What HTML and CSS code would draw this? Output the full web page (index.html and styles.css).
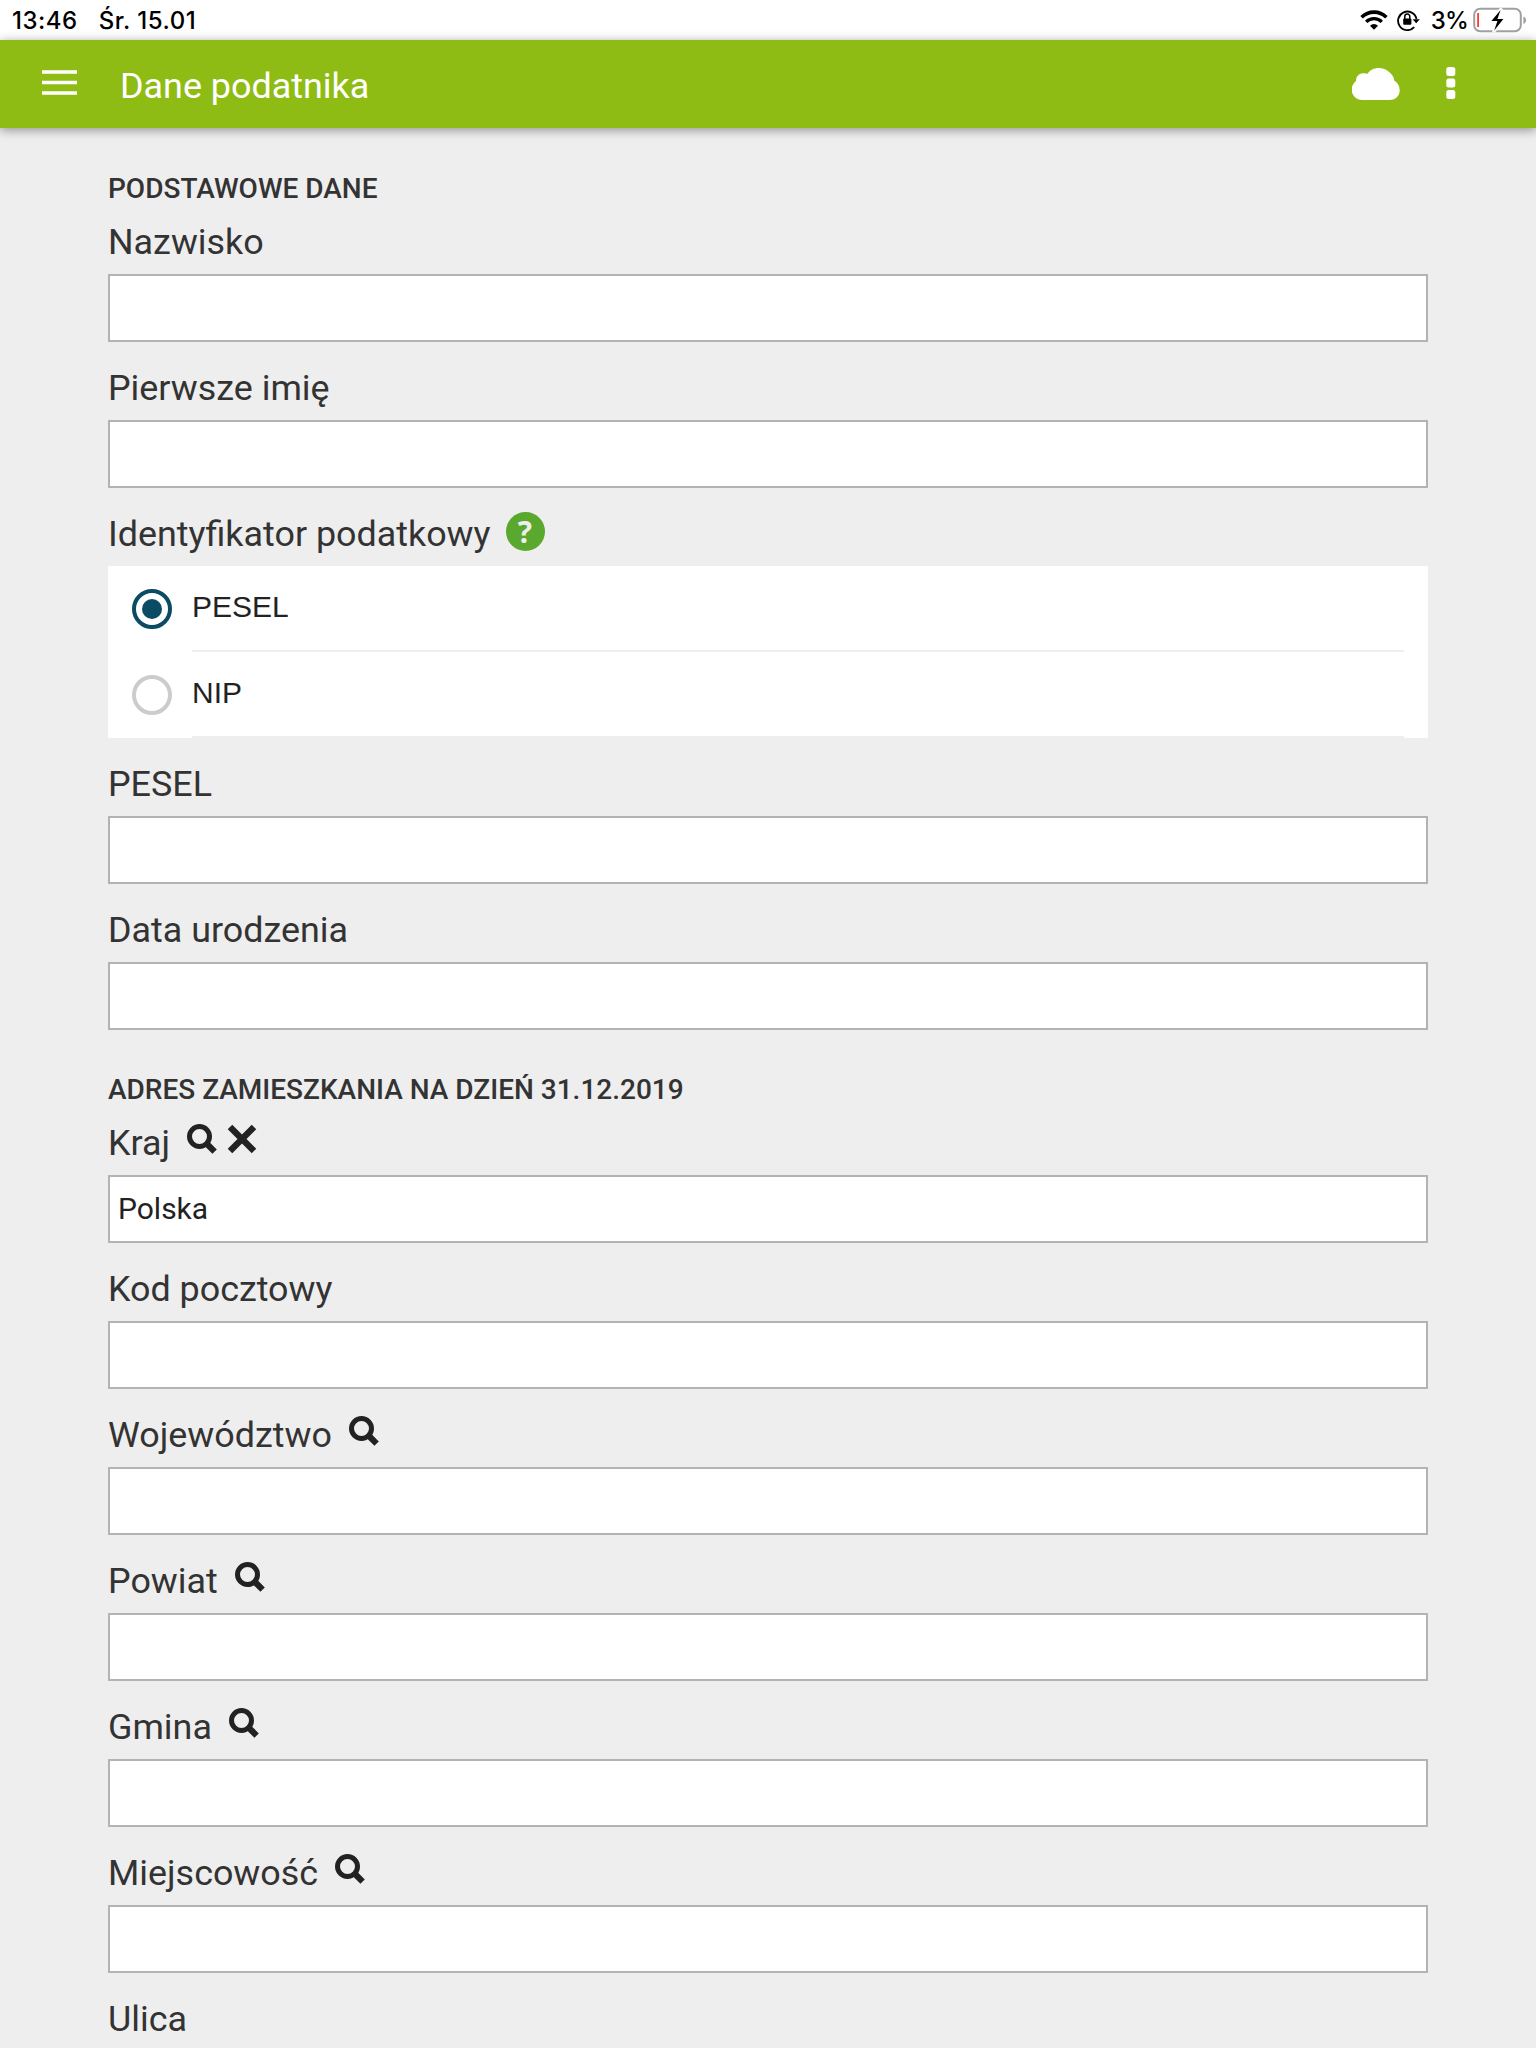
FILE: index.html
```html
<!DOCTYPE html>
<html lang="pl">
<head>
    <meta charset="utf-8">
    <title>Dane podatnika</title>
    <link rel="stylesheet" href="styles.css">
</head>
<body>
    <!-- icons used more than once -->
    <svg class="sprite">
        <symbol id="search" viewBox="0 0 30 30">
            <circle cx="12.5" cy="12.5" r="10" fill="none" stroke="#222" stroke-width="5"/>
            <path d="M19.5 19.5L27.600 27.600" stroke="#222" stroke-width="6.2"/>
        </symbol>
    </svg>

    <div class="status-bar">
        <span class="time">13:46</span>
        <span class="date">Śr. 15.01</span>
        <svg class="wifi" width="28" height="20" viewBox="0 0 28 20">
            <path d="M1.6 7.2a17.6 17.6 0 0 1 24.8 0" fill="none" stroke="#000" stroke-width="3.6"/>
            <path d="M6.2 11.9a11 11 0 0 1 15.6 0" fill="none" stroke="#000" stroke-width="3.4"/>
            <path d="M14 19.8l-4-4.1a5.8 5.8 0 0 1 8 0z"/>
        </svg>
        <svg class="lock" width="24" height="22" viewBox="0 0 24 22">
            <path d="M17.2 18.2A9.3 9.3 0 1 1 19.5 10" fill="none" stroke="#000" stroke-width="1.8"/>
            <path d="M15.6 10.2h7.2l-3.6 4z"/>
            <rect x="6.2" y="9.4" width="8.2" height="6.4" rx="1"/>
            <path d="M7.8 10V7.6a2.5 2.5 0 0 1 5 0V10" fill="none" stroke="#000" stroke-width="1.5"/>
        </svg>
        <span class="percent">3%</span>
        <svg class="battery" width="54" height="26" viewBox="0 0 54 26">
            <rect x="1.2" y="1.8" width="46.6" height="22.4" rx="6" fill="none" stroke="#a0a0a0" stroke-width="2"/>
            <path d="M50.4 9.4a4 4 0 0 1 0 7.6z" fill="#a0a0a0"/>
            <rect x="4.2" y="6" width="1.8" height="14" fill="#ff3b30"/>
            <path d="M28.5 1.5L17 15h6.5l-3 10L32 11.5h-6.5z" stroke="#fff" stroke-width="3"/>
            <path d="M27.6 3L18.4 14h6l-3.2 9.6L30.4 12h-6z"/>
        </svg>
    </div>

    <div class="header">
        <svg class="menu" width="36" height="26" viewBox="0 0 36 26">
            <path d="M0 2h35M0 12.5h35M0 23h35" stroke="#fff" stroke-width="3.4"/>
        </svg>
        <h1>Dane podatnika</h1>
        <svg class="cloud" width="48" height="32" viewBox="0 0 48 32" fill="#fff">
            <path d="M10.500 32A10.500 10.500 0 0 1 4 13C4 6 10 4 15.500 5.800C20 -1.500 31 -1.500 36.500 3.500C40 6 42 9 42.300 12.500C51 18 49 32 37.500 32z"/>
        </svg>
        <svg class="dots" width="10" height="32" viewBox="0 0 10 32" fill="#fff">
            <rect x=".3" y="0" width="9" height="9" rx="2.500"/>
            <rect x=".3" y="11.500" width="9" height="9" rx="2.500"/>
            <rect x=".3" y="23" width="9" height="9" rx="2.500"/>
        </svg>
    </div>

    <form class="form">
        <h2>PODSTAWOWE DANE</h2>
        <div class="form-group">
            <label for="nazwisko">Nazwisko</label>
            <input type="text" id="nazwisko">
        </div>
        <div class="form-group">
            <label for="imie">Pierwsze imię</label>
            <input type="text" id="imie">
        </div>
        <div class="form-group">
            <label>Identyfikator podatkowy <span class="help">?</span></label>
            <div class="radio-list">
                <div class="radio-row">
                    <span class="radio checked"></span>
                    <span class="radio-text">PESEL</span>
                </div>
                <div class="radio-row">
                    <span class="radio"></span>
                    <span class="radio-text">NIP</span>
                </div>
            </div>
        </div>
        <div class="form-group">
            <label for="pesel">PESEL</label>
            <input type="text" id="pesel">
        </div>
        <div class="form-group">
            <label for="data">Data urodzenia</label>
            <input type="text" id="data">
        </div>

        <h2 class="next">ADRES ZAMIESZKANIA NA DZIEŃ 31.12.2019</h2>
        <div class="form-group">
            <label for="kraj">Kraj
                <svg class="icon"><use href="#search"/></svg>
                <svg class="icon clear" viewBox="0 0 30 30"><path d="M3 3L27 27M27 3L3 27" stroke="#222" stroke-width="6.400"/></svg>
            </label>
            <input type="text" id="kraj" value="Polska">
        </div>
        <div class="form-group">
            <label for="kod">Kod pocztowy</label>
            <input type="text" id="kod">
        </div>
        <div class="form-group">
            <label for="wojewodztwo">Województwo <svg class="icon"><use href="#search"/></svg></label>
            <input type="text" id="wojewodztwo">
        </div>
        <div class="form-group">
            <label for="powiat">Powiat <svg class="icon"><use href="#search"/></svg></label>
            <input type="text" id="powiat">
        </div>
        <div class="form-group">
            <label for="gmina">Gmina <svg class="icon"><use href="#search"/></svg></label>
            <input type="text" id="gmina">
        </div>
        <div class="form-group">
            <label for="miejscowosc">Miejscowość <svg class="icon"><use href="#search"/></svg></label>
            <input type="text" id="miejscowosc">
        </div>
        <div class="form-group">
            <label for="ulica">Ulica</label>
            <input type="text" id="ulica">
        </div>
    </form>
</body>
</html>
```
FILE: styles.css
```css
* {
    box-sizing: border-box;
}
body {
    margin: 0;
    height: 2048px;
    overflow: hidden;
    background: #eee;
    color: #333;
    font-family: Roboto, sans-serif;
}
.sprite {
    display: none;
}
.status-bar {
    display: flex;
    align-items: center;
    height: 40px;
    padding: 0 9px 0 12px;
    background: #fff;
    color: #000;
    font: 500 24px Inter, sans-serif;
    letter-spacing: 0.5px;
}
.date {
    margin-left: 21px;
}
.wifi {
    margin-left: auto;
}
.lock {
    margin-left: 9px;
}
.percent {
    margin-left: 10px;
    letter-spacing: -0.8px;
}
.battery {
    margin-left: 5px;
}
.header {
    display: flex;
    align-items: center;
    height: 88px;
    padding: 0 80px 0 42px;
    background: #8fbc14;
    box-shadow: 0 2px 10px rgba(0,0,0,0.4);
}
.header h1 {
    margin: 3px auto 0 42px;
    color: #fff;
    font-size: 35.9px;
    font-weight: 400;
}
.menu {
    margin-bottom: 2px;
}
.dots {
    margin-left: 46px;
    margin-bottom: 2px;
}
.form {
    padding: 39px 108px 0;
}
h2 {
    margin: 0;
    font-size: 28px;
    line-height: 43px;
    font-weight: 500;
}
h2.next {
    margin-top: 39px;
    line-height: 42px;
}
.form-group {
    margin-bottom: 14px;
}
label {
    display: flex;
    align-items: center;
    height: 64px;
    font-size: 35.87px;
}
input {
    display: block;
    width: 100%;
    height: 68px;
    padding: 0 8px 2px;
    border: 2px solid #b3b3b3;
    border-radius: 0;
    background: #fff;
    color: #222;
    font: 30px Roboto, sans-serif;
}
.icon {
    width: 30px;
    height: 30px;
    margin: 0 0 8px 17px;
}
.icon.clear {
    margin-left: 10px;
}
.help {
    width: 39px;
    height: 39px;
    margin: 0 0 5px 15px;
    border-radius: 50%;
    background: #5ba82e;
    color: #eee;
    font: bold 30px/39px "Open Sans", sans-serif;
    text-align: center;
}
.radio-list {
    padding: 0 24px;
    background: #fff;
}
.radio-row {
    display: flex;
    align-items: center;
    height: 86px;
}
.radio {
    width: 40px;
    height: 40px;
    margin-right: 20px;
    border: 4px solid #ccc;
    border-radius: 50%;
}
.radio.checked {
    padding: 6px;
    border-color: #094c63;
    background: #094c63 content-box;
}
.radio-text {
    flex: 1;
    height: 86px;
    border-bottom: 2px solid #eee;
    color: #222;
    font: 30px/82px "Liberation Sans", sans-serif;
}
```
